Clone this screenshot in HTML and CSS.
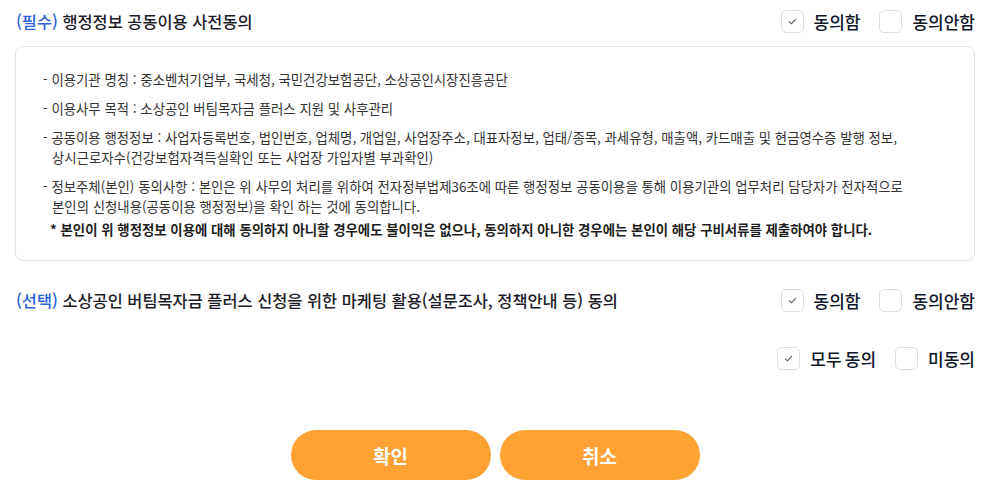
FILE: index.html
```html
<!DOCTYPE html>
<html lang="ko">
<head>
<meta charset="utf-8">
<link rel="stylesheet" href="styles.css">
</head>
<body>
<div class="wrap">
  <div class="row row-first">
    <h2 class="title"><span class="tag">(필수)</span> 행정정보 공동이용 사전동의</h2>
    <div class="opts">
      <label class="opt"><span class="box checked"><svg viewBox="0 0 10 8" width="9" height="7"><path d="M1 4.2 L3.8 6.6 L9 1.2" fill="none" stroke="#555" stroke-width="1.2"/></svg></span><span class="lbl">동의함</span></label>
      <label class="opt"><span class="box"></span><span class="lbl">동의안함</span></label>
    </div>
  </div>
  <div class="panel">
    <ul class="list">
      <li>- 이용기관 명칭 : 중소벤처기업부, 국세청, 국민건강보험공단, 소상공인시장진흥공단</li>
      <li>- 이용사무 목적 : 소상공인 버팀목자금 플러스 지원 및 사후관리</li>
      <li>- 공동이용 행정정보 : 사업자등록번호, 법인번호, 업체명, 개업일, 사업장주소, 대표자정보, 업태/종목, 과세유형, 매출액, 카드매출 및 현금영수증 발행 정보,<br><span class="indent">상시근로자수(건강보험자격득실확인 또는 사업장 가입자별 부과확인)</span></li>
      <li>- 정보주체(본인) 동의사항 : 본인은 위 사무의 처리를 위하여 전자정부법제36조에 따른 행정정보 공동이용을 통해 이용기관의 업무처리 담당자가 전자적으로<br><span class="indent">본인의 신청내용(공동이용 행정정보)을 확인 하는 것에 동의합니다.</span><br><strong class="note">* 본인이 위 행정정보 이용에 대해 동의하지 아니할 경우에도 불이익은 없으나, 동의하지 아니한 경우에는 본인이 해당 구비서류를 제출하여야 합니다.</strong></li>
    </ul>
  </div>
  <div class="row row-second">
    <h2 class="title"><span class="tag">(선택)</span> 소상공인 버팀목자금 플러스 신청을 위한 마케팅 활용(설문조사, 정책안내 등) 동의</h2>
    <div class="opts">
      <label class="opt"><span class="box checked"><svg viewBox="0 0 10 8" width="9" height="7"><path d="M1 4.2 L3.8 6.6 L9 1.2" fill="none" stroke="#555" stroke-width="1.2"/></svg></span><span class="lbl">동의함</span></label>
      <label class="opt"><span class="box"></span><span class="lbl">동의안함</span></label>
    </div>
  </div>
  <div class="row row-all">
    <div class="opts opts-all">
      <label class="opt"><span class="box checked"><svg viewBox="0 0 10 8" width="9" height="7"><path d="M1 4.2 L3.8 6.6 L9 1.2" fill="none" stroke="#555" stroke-width="1.2"/></svg></span><span class="lbl lbl-all">모두 동의</span></label>
      <label class="opt"><span class="box"></span><span class="lbl">미동의</span></label>
    </div>
  </div>
  <div class="buttons">
    <button class="btn">확인</button>
    <button class="btn">취소</button>
  </div>
</div>
</body>
</html>
```

FILE: styles.css
```css
* { box-sizing: border-box; }
html, body { margin: 0; padding: 0; background: #fff; }
body {
  font-family: "Noto Sans CJK KR", "Noto Sans", sans-serif;
  color: #222;
}
.wrap {
  width: 960px;
  margin-left: 15px;
}
.row {
  display: flex;
  align-items: center;
  justify-content: space-between;
}
.row-first { height: 42px; margin-bottom: 4px; }
.row-second { height: 46px; margin-top: 16px; }
.row-all { height: 46px; margin-top: 12px; justify-content: flex-end; }
.title {
  margin: 0 0 0 1px;
  font-size: 16.4px;
  font-weight: 500;
  letter-spacing: 0;
  color: #1c1c28;
}
.tag { color: #2b63d8; }
.opts { display: flex; align-items: center; gap: 19px; }
.opt { display: flex; align-items: center; gap: 10px; cursor: pointer; }
.opts-all { gap: 19px; }
.opts-all .opt { gap: 10px; }
.box {
  width: 23px;
  height: 23px;
  border: 1px solid #dedede;
  border-radius: 5px;
  display: flex;
  align-items: center;
  justify-content: center;
  background: #fff;
}
.lbl {
  font-size: 17px;
  font-weight: 500;
  color: #0f172a;
}
.lbl-all { word-spacing: -1.5px; }
.panel {
  border: 1px solid #e2e2e2;
  border-radius: 8px;
  height: 215px;
  padding: 22px 27px 0 27px;
}
.list {
  list-style: none;
  margin: 0;
  padding: 0;
  font-size: 13.4px;
  line-height: 20px;
  letter-spacing: 0;
  color: #333;
}
.list li { margin-bottom: 9px; }
.indent { padding-left: 9px; }
.note {
  display: inline-block;
  margin-top: 3px;
  padding-left: 7px;
  font-weight: 700;
  color: #1e1e1e;
}
.buttons {
  display: flex;
  justify-content: center;
  gap: 9px;
  margin-top: 49px;
}
.btn {
  width: 200px;
  height: 50px;
  border: 0;
  border-radius: 25px;
  background: #ffa233;
  color: #fff;
  font-family: "Noto Sans CJK KR", sans-serif;
  font-size: 19px;
  font-weight: 700;
}
```
